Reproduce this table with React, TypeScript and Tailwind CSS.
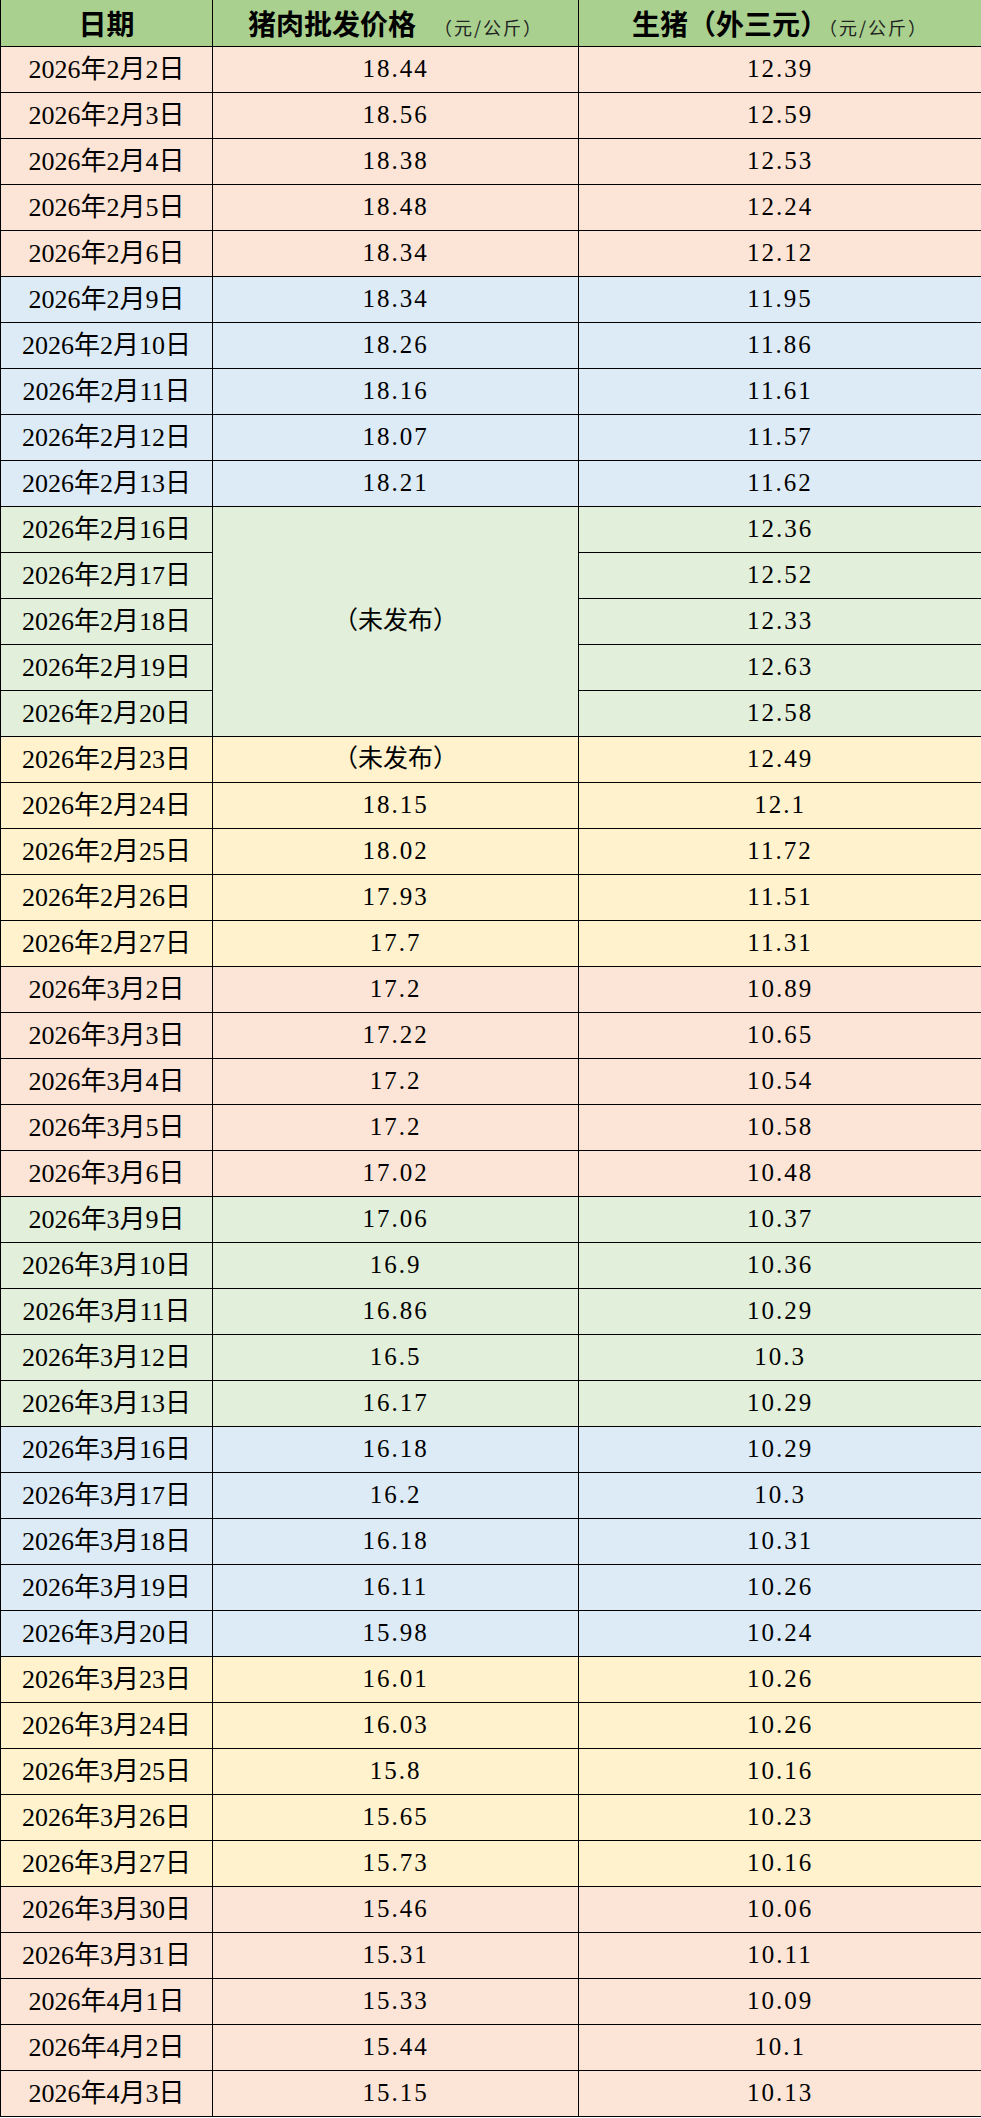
const PINK = "bg-[#fce4d6]";
const BLUE = "bg-[#ddebf7]";
const GREEN = "bg-[#e2efda]";
const YELLOW = "bg-[#fff2cc]";

type Row = { date: string; pork?: string; hog: string; bg: string; span?: number };

// pork undefined -> cell covered by the merged "（未发布）" above
const rows: Row[] = [
  { date: "2026年2月2日", pork: "18.44", hog: "12.39", bg: PINK },
  { date: "2026年2月3日", pork: "18.56", hog: "12.59", bg: PINK },
  { date: "2026年2月4日", pork: "18.38", hog: "12.53", bg: PINK },
  { date: "2026年2月5日", pork: "18.48", hog: "12.24", bg: PINK },
  { date: "2026年2月6日", pork: "18.34", hog: "12.12", bg: PINK },
  { date: "2026年2月9日", pork: "18.34", hog: "11.95", bg: BLUE },
  { date: "2026年2月10日", pork: "18.26", hog: "11.86", bg: BLUE },
  { date: "2026年2月11日", pork: "18.16", hog: "11.61", bg: BLUE },
  { date: "2026年2月12日", pork: "18.07", hog: "11.57", bg: BLUE },
  { date: "2026年2月13日", pork: "18.21", hog: "11.62", bg: BLUE },
  { date: "2026年2月16日", pork: "（未发布）", hog: "12.36", bg: GREEN, span: 5 },
  { date: "2026年2月17日", hog: "12.52", bg: GREEN },
  { date: "2026年2月18日", hog: "12.33", bg: GREEN },
  { date: "2026年2月19日", hog: "12.63", bg: GREEN },
  { date: "2026年2月20日", hog: "12.58", bg: GREEN },
  { date: "2026年2月23日", pork: "（未发布）", hog: "12.49", bg: YELLOW },
  { date: "2026年2月24日", pork: "18.15", hog: "12.1", bg: YELLOW },
  { date: "2026年2月25日", pork: "18.02", hog: "11.72", bg: YELLOW },
  { date: "2026年2月26日", pork: "17.93", hog: "11.51", bg: YELLOW },
  { date: "2026年2月27日", pork: "17.7", hog: "11.31", bg: YELLOW },
  { date: "2026年3月2日", pork: "17.2", hog: "10.89", bg: PINK },
  { date: "2026年3月3日", pork: "17.22", hog: "10.65", bg: PINK },
  { date: "2026年3月4日", pork: "17.2", hog: "10.54", bg: PINK },
  { date: "2026年3月5日", pork: "17.2", hog: "10.58", bg: PINK },
  { date: "2026年3月6日", pork: "17.02", hog: "10.48", bg: PINK },
  { date: "2026年3月9日", pork: "17.06", hog: "10.37", bg: GREEN },
  { date: "2026年3月10日", pork: "16.9", hog: "10.36", bg: GREEN },
  { date: "2026年3月11日", pork: "16.86", hog: "10.29", bg: GREEN },
  { date: "2026年3月12日", pork: "16.5", hog: "10.3", bg: GREEN },
  { date: "2026年3月13日", pork: "16.17", hog: "10.29", bg: GREEN },
  { date: "2026年3月16日", pork: "16.18", hog: "10.29", bg: BLUE },
  { date: "2026年3月17日", pork: "16.2", hog: "10.3", bg: BLUE },
  { date: "2026年3月18日", pork: "16.18", hog: "10.31", bg: BLUE },
  { date: "2026年3月19日", pork: "16.11", hog: "10.26", bg: BLUE },
  { date: "2026年3月20日", pork: "15.98", hog: "10.24", bg: BLUE },
  { date: "2026年3月23日", pork: "16.01", hog: "10.26", bg: YELLOW },
  { date: "2026年3月24日", pork: "16.03", hog: "10.26", bg: YELLOW },
  { date: "2026年3月25日", pork: "15.8", hog: "10.16", bg: YELLOW },
  { date: "2026年3月26日", pork: "15.65", hog: "10.23", bg: YELLOW },
  { date: "2026年3月27日", pork: "15.73", hog: "10.16", bg: YELLOW },
  { date: "2026年3月30日", pork: "15.46", hog: "10.06", bg: PINK },
  { date: "2026年3月31日", pork: "15.31", hog: "10.11", bg: PINK },
  { date: "2026年4月1日", pork: "15.33", hog: "10.09", bg: PINK },
  { date: "2026年4月2日", pork: "15.44", hog: "10.1", bg: PINK },
  { date: "2026年4月3日", pork: "15.15", hog: "10.13", bg: PINK },
];

const cell = "border border-black p-0 text-center align-middle";
const num = "text-[25px] tracking-[2px]";

export default function App() {
  return (
    <div className="w-[981px] bg-white text-black font-['Liberation_Serif','Noto_Sans_CJK_SC',serif]">
      <table className="w-[981px] table-fixed border-collapse">
        <colgroup>
          <col className="w-[212px]" />
          <col className="w-[366px]" />
          <col className="w-[403px]" />
        </colgroup>
        <thead>
          <tr className="h-[46px] bg-[#a9d08e] font-['Noto_Sans_CJK_SC',sans-serif]">
            <th className={`${cell} border-t-0 text-[28px] font-bold`}>日期</th>
            <th className={`${cell} border-t-0 text-[28px] font-bold`}>
              猪肉批发价格
              <span className="ml-[18px] text-[18px] font-normal tracking-[2px] text-[#222]">（元/公斤）</span>
            </th>
            <th className={`${cell} border-t-0 text-[28px] font-bold`}>
              生猪（外三元）
              <span className="text-[18px] font-normal tracking-[2px] text-[#222]">（元/公斤）</span>
            </th>
          </tr>
        </thead>
        <tbody>
          {rows.map((r) => (
            <tr key={r.date} className={`h-[46px] ${r.bg}`}>
              <td className={`${cell} text-[26px]`}>{r.date}</td>
              {r.pork !== undefined && (
                <td rowSpan={r.span} className={`${cell} ${r.pork.startsWith("（") ? "text-[25px]" : num}`}>
                  {r.pork}
                </td>
              )}
              <td className={`${cell} ${num}`}>{r.hog}</td>
            </tr>
          ))}
        </tbody>
      </table>
    </div>
  );
}
